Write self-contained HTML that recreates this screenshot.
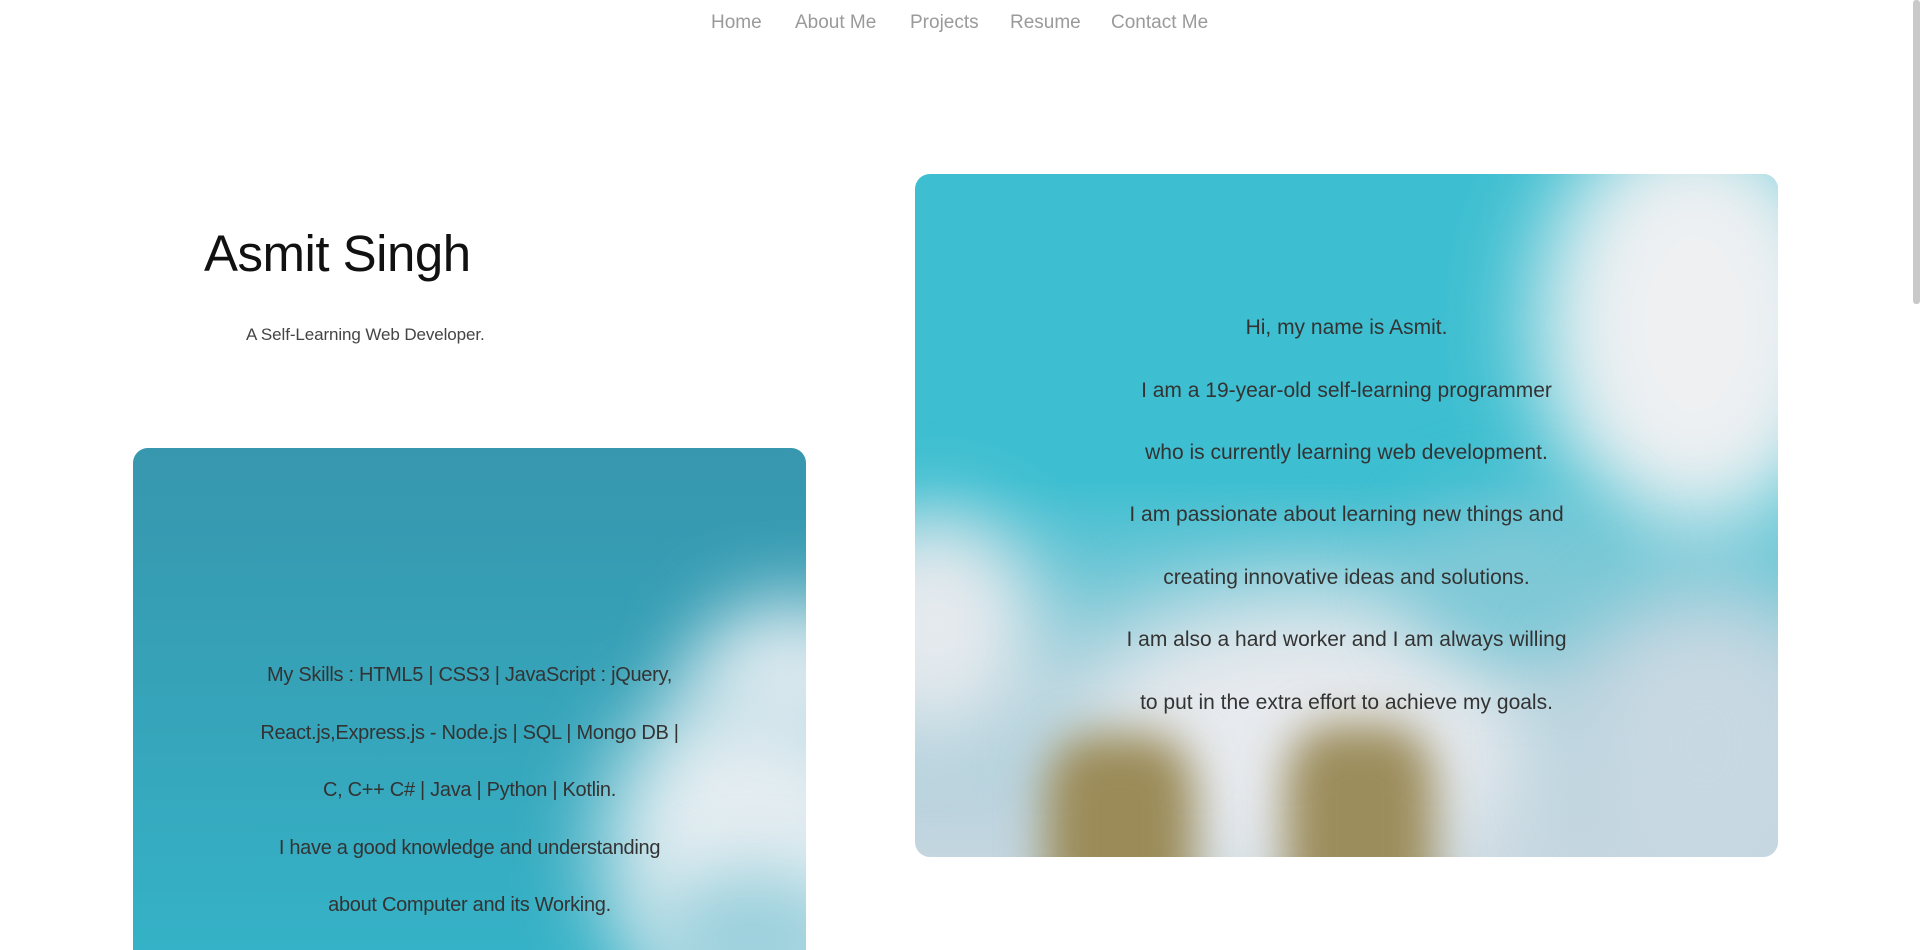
<!DOCTYPE html>
<html><head><meta charset="utf-8"><style>
html,body{margin:0;padding:0;width:1920px;height:950px;overflow:hidden;background:#fff;font-family:"Liberation Sans",sans-serif;}
.nav{position:absolute;top:12px;font-size:19px;color:#9a9a9a;}
.card{position:absolute;overflow:hidden;border-radius:15px;}
.b{position:absolute;border-radius:50%;filter:blur(40px);}
.t{position:absolute;left:0;right:0;text-align:center;color:#333;letter-spacing:-0.3px;}
</style></head><body>
<div class="nav" style="left:711px">Home</div>
<div class="nav" style="left:795px">About Me</div>
<div class="nav" style="left:910px">Projects</div>
<div class="nav" style="left:1010px">Resume</div>
<div class="nav" style="left:1111px">Contact Me</div>
<div style="position:absolute;left:1913px;top:0;width:7px;height:304px;background:#c9c9c9;border-radius:3px"></div>

<div style="position:absolute;left:204px;top:224px;font-size:51px;font-weight:300;color:#111;letter-spacing:-0.5px">Asmit Singh</div>
<div style="position:absolute;left:246px;top:325px;font-size:17px;color:#444;letter-spacing:-0.1px">A Self-Learning Web Developer.</div>

<div class="card" style="left:133px;top:448px;width:673px;height:502px;border-radius:15px 15px 0 0;background:linear-gradient(180deg,#3797ae 0%,#36a2b8 45%,#35b2c7 100%)">
  <div class="b" style="left:470px;top:230px;width:300px;height:340px;background:#e6eef2;filter:blur(45px)"></div>
  <div class="b" style="left:560px;top:150px;width:200px;height:160px;background:#dbe8ee;filter:blur(40px)"></div>
  <div class="b" style="left:520px;top:420px;width:200px;height:140px;background:#9bd0dc;filter:blur(35px)"></div>
  <div class="t" style="top:216px;font-size:20px">My Skills : HTML5 | CSS3 | JavaScript : jQuery,</div>
  <div class="t" style="top:274px;font-size:20px">React.js,Express.js - Node.js | SQL | Mongo DB |</div>
  <div class="t" style="top:331px;font-size:20px">C, C++ C# | Java | Python | Kotlin.</div>
  <div class="t" style="top:389px;font-size:20px">I have a good knowledge and understanding</div>
  <div class="t" style="top:446px;font-size:20px">about Computer and its Working.</div>
</div>

<div class="card" style="left:915px;top:174px;width:863px;height:683px;background:linear-gradient(180deg,#3dbfd1 0%,#3dbfd1 45%,#a9cfdb 75%,#c4d6e0 100%)">
  <div class="b" style="left:620px;top:-60px;width:320px;height:420px;background:#eef0f2;filter:blur(45px)"></div>
  <div class="b" style="left:-80px;top:340px;width:200px;height:220px;background:#e6eaee;filter:blur(40px)"></div>
  <div class="b" style="left:160px;top:420px;width:460px;height:300px;background:#e7eaee;filter:blur(50px)"></div>
  <div class="b" style="left:500px;top:330px;width:200px;height:150px;background:#7fc8d6;filter:blur(40px)"></div>
  <div class="b" style="left:660px;top:420px;width:260px;height:300px;background:#c8d8e2;filter:blur(45px)"></div>
  <div class="b" style="left:130px;top:560px;width:150px;height:200px;background:#9b8b58;border-radius:30%;filter:blur(22px)"></div>
  <div class="b" style="left:370px;top:550px;width:150px;height:210px;background:#9c8d5c;border-radius:30%;filter:blur(22px)"></div>
  <div class="t" style="top:142px;font-size:21px;letter-spacing:0">Hi, my name is Asmit.</div>
  <div class="t" style="top:205px;font-size:21px;letter-spacing:0">I am a 19-year-old self-learning programmer</div>
  <div class="t" style="top:267px;font-size:21px;letter-spacing:0">who is currently learning web development.</div>
  <div class="t" style="top:329px;font-size:21px;letter-spacing:0">I am passionate about learning new things and</div>
  <div class="t" style="top:392px;font-size:21px;letter-spacing:0">creating innovative ideas and solutions.</div>
  <div class="t" style="top:454px;font-size:21px;letter-spacing:0">I am also a hard worker and I am always willing</div>
  <div class="t" style="top:517px;font-size:21px;letter-spacing:0">to put in the extra effort to achieve my goals.</div>
</div>
</body></html>
